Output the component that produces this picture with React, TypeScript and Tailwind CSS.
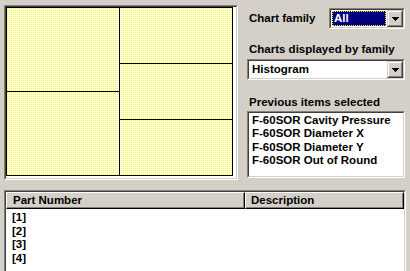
import React from "react";

const font = { fontFamily: '"Liberation Sans", Arial, sans-serif' };

function Sunken({ className = "", children }: { className?: string; children?: React.ReactNode }) {
  return (
    <div className={"border border-t-[#808080] border-l-[#808080] border-b-white border-r-white " + className}>
      <div className="w-full h-full border border-t-[#404040] border-l-[#404040] border-b-[#d4d0c8] border-r-[#d4d0c8] bg-white flex">
        {children}
      </div>
    </div>
  );
}

function DropButton() {
  return (
    <div className="w-[16px] h-full border border-t-[#d4d0c8] border-l-[#d4d0c8] border-b-[#404040] border-r-[#404040] bg-[#d4d0c8]">
      <div className="w-full h-full border border-t-white border-l-white border-b-[#808080] border-r-[#808080] flex items-center justify-center">
        <svg width="7" height="4" viewBox="0 0 7 4" className="mt-[1px]">
          <path d="M0 0H7L3.5 4Z" fill="#000" shapeRendering="crispEdges" />
        </svg>
      </div>
    </div>
  );
}

function Cell({ h, id, dx }: { h: string; id: string; dx: number }) {
  return (
    <div className={"bg-white " + h}>
      <svg width="112" height="100%" className="block h-full">
        <defs>
          <pattern id={id} x="0" y="0" width="2" height="2" patternUnits="userSpaceOnUse">
            <rect x={dx} y="0" width="1" height="1" fill="#ffff00" shapeRendering="crispEdges" />
          </pattern>
        </defs>
        <rect width="100%" height="100%" fill={`url(#${id})`} />
      </svg>
    </div>
  );
}

export default function App() {
  const items = ["F-60SOR Cavity Pressure", "F-60SOR Diameter X", "F-60SOR Diameter Y", "F-60SOR Out of Round"];
  return (
    <div className="w-[410px] h-[271px] bg-[#d4d0c8] overflow-hidden flex flex-col text-[11.5px] font-bold text-black" style={font}>
      <div className="flex pt-[5px] pl-[4px]">
        <Sunken className="w-[234px] h-[175px]">
          <div className="w-[227px] h-[169px] border border-black bg-black flex gap-px">
            <div className="w-[112px] flex flex-col gap-px">
              <Cell h="h-[83px]" id="p1" dx={0} />
              <Cell h="h-[83px]" id="p2" dx={0} />
            </div>
            <div className="w-[112px] flex flex-col gap-px">
              <Cell h="h-[55px]" id="p3" dx={1} />
              <Cell h="h-[55px]" id="p4" dx={1} />
              <Cell h="h-[55px]" id="p5" dx={1} />
            </div>
          </div>
        </Sunken>
        <div className="ml-[9px] w-[158px] flex flex-col">
          <div className="mt-[3px] flex items-center">
            <div className="flex-1 pl-[2px] leading-[13px]">Chart family</div>
            <Sunken className="w-[76px] h-[21px]">
              <div className="flex-1 p-px">
                <div className="w-full h-full bg-[#000080] border border-dotted border-[#ffff00] text-white pl-px leading-[13px]">All</div>
              </div>
              <DropButton />
            </Sunken>
          </div>
          <div className="mt-[14px] pl-[2px] leading-[13px] h-[13px] whitespace-nowrap">Charts displayed by family</div>
          <Sunken className="mt-[3px] w-[158px] h-[21px]">
            <div className="flex-1 pl-[3px] leading-[17px]">Histogram</div>
            <DropButton />
          </Sunken>
          <div className="mt-[16px] pl-[2px] leading-[13px] h-[13px]">Previous items selected</div>
          <Sunken className="mt-[2px] w-[158px] h-[67px]">
            <div className="flex-1 flex flex-col pl-[3px] pt-px">
              {items.map((t) => (
                <div key={t} className="leading-[13.33px] h-[13.33px] whitespace-nowrap">{t}</div>
              ))}
            </div>
          </Sunken>
        </div>
      </div>
      <div className="mt-[10px] ml-[4px] w-[402px] flex-1 border border-t-[#808080] border-l-[#808080] border-r-white border-b-0">
        <div className="w-full h-full border border-t-[#404040] border-l-[#404040] border-r-[#d4d0c8] border-b-0 bg-white flex flex-col">
          <div className="flex h-[17px]">
            <div className="w-[239px] border border-t-white border-l-white border-b-black border-r-black bg-[#d4d0c8]">
              <div className="h-full border-b border-r border-[#808080] pl-[6px] leading-[14px]">Part Number</div>
            </div>
            <div className="flex-1 border border-t-white border-l-white border-b-black border-r-black bg-[#d4d0c8]">
              <div className="h-full border-b border-r border-[#808080] pl-[5px] leading-[14px]">Description</div>
            </div>
          </div>
          <div className="flex flex-col pl-[6px] pt-[2px]">
            {["[1]", "[2]", "[3]", "[4]"].map((t) => (
              <div key={t} className="leading-[13.5px] h-[13.5px]">{t}</div>
            ))}
          </div>
        </div>
      </div>
    </div>
  );
}
